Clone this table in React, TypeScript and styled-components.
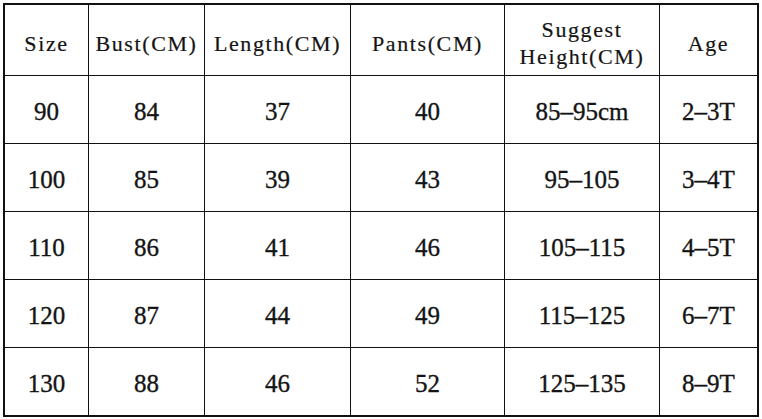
import styled, { createGlobalStyle } from "styled-components";

const GlobalStyle = createGlobalStyle`
  html, body {
    margin: 0;
    padding: 0;
    background: #ffffff;
  }
`;

const Page = styled.div`
  padding: 3px 0 0 3px;
  width: 762px;
  height: 419px;
  box-sizing: border-box;
  overflow: hidden;
`;

const Grid = styled.div`
  display: grid;
  grid-template-columns: 83px 115px 145px 153px 154px 97px;
  grid-template-rows: 70px repeat(5, 67px);
  gap: 1px;
  width: max-content;
  background: #111;
  border: 2px solid #111;
`;

const Cell = styled.div<{ $head?: boolean }>`
  display: flex;
  align-items: center;
  justify-content: center;
  text-align: center;
  background: #fff;
  color: #141414;
  font-family: "Liberation Serif", serif;
  font-size: ${({ $head }) => ($head ? "22px" : "25px")};
  letter-spacing: ${({ $head }) => ($head ? "1.6px" : "0")};
  line-height: ${({ $head }) => ($head ? "27px" : "30px")};
  padding-top: ${({ $head }) => ($head ? "6px" : "4px")};
  -webkit-text-stroke: ${({ $head }) => ($head ? "0.2px" : "0.35px")} #141414;
  box-sizing: border-box;
  white-space: pre-line;
`;

const headers = [
  "Size",
  "Bust(CM)",
  "Length(CM)",
  "Pants(CM)",
  "Suggest\nHeight(CM)",
  "Age",
];

const rows = [
  ["90", "84", "37", "40", "85\u201295cm", "2\u20123T"],
  ["100", "85", "39", "43", "95\u2012105", "3\u20124T"],
  ["110", "86", "41", "46", "105\u2012115", "4\u20125T"],
  ["120", "87", "44", "49", "115\u2012125", "6\u20127T"],
  ["130", "88", "46", "52", "125\u2012135", "8\u20129T"],
];

export default function App() {
  return (
    <>
      <GlobalStyle />
      <Page>
        <Grid>
          {headers.map((h) => (
            <Cell key={h} $head>
              {h}
            </Cell>
          ))}
          {rows.map((row, i) =>
            row.map((v, j) => <Cell key={`${i}-${j}`}>{v}</Cell>)
          )}
        </Grid>
      </Page>
    </>
  );
}
